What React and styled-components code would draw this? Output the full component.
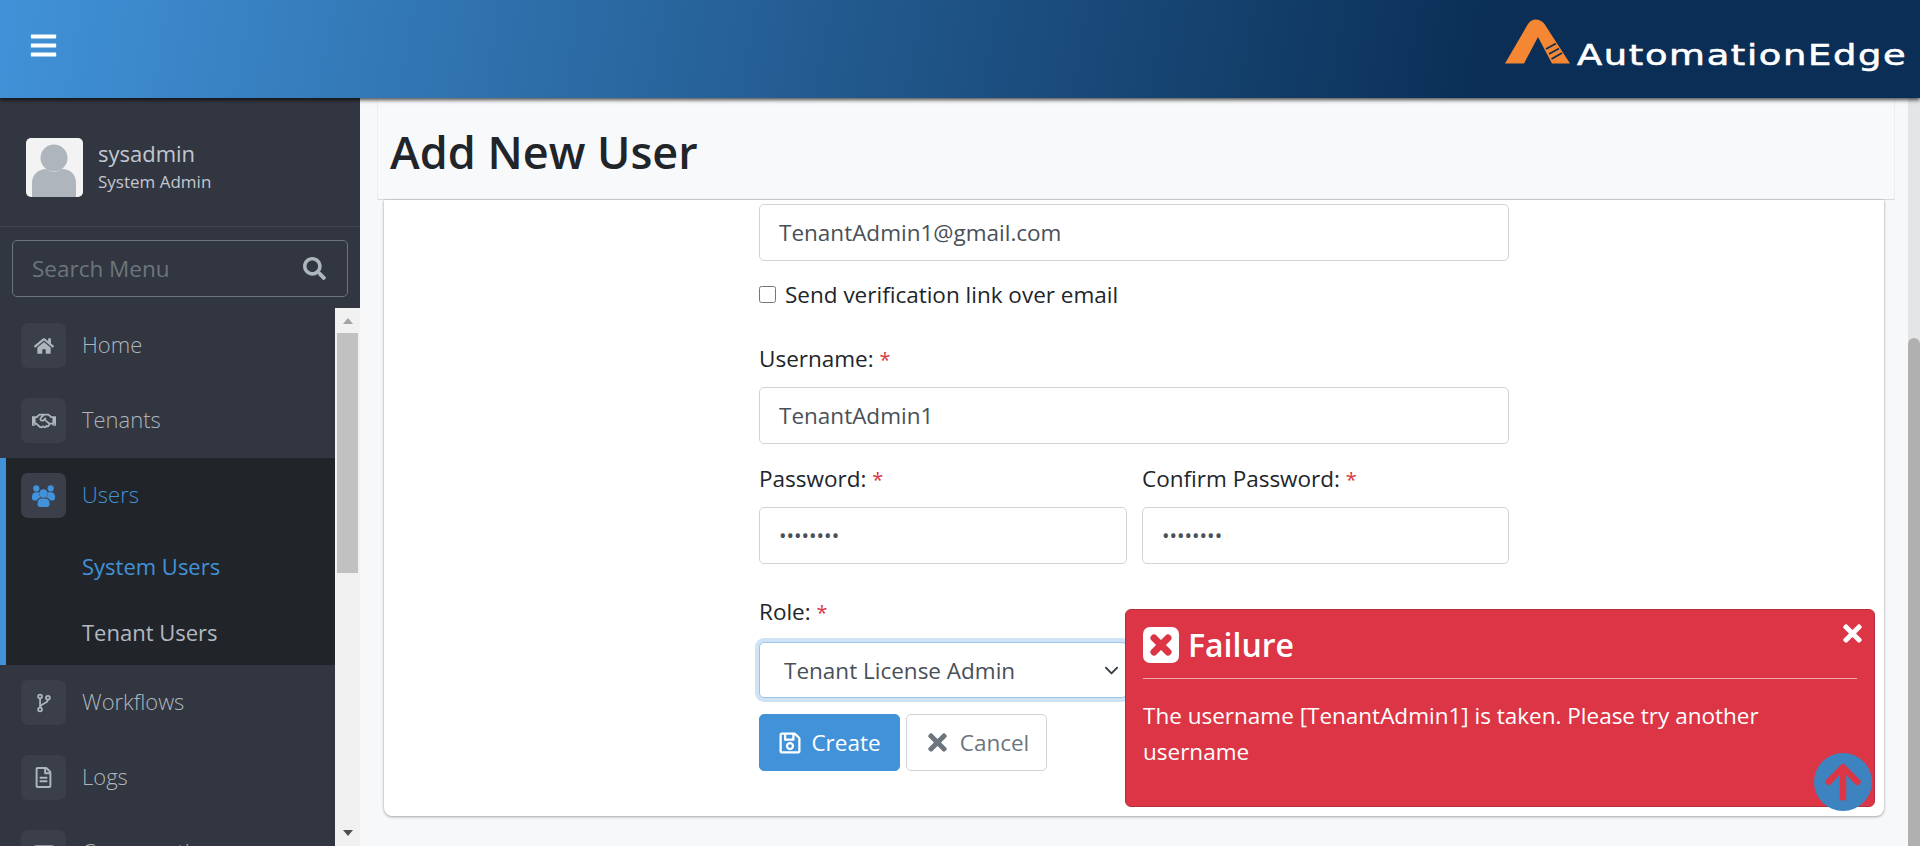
import React from "react";
import styled, { createGlobalStyle } from "styled-components";
// icons
import {
  FaArrowUp,
  FaBars,
  FaHome,
  FaRegCreditCard,
  FaRegFileAlt,
  FaRegHandshake,
  FaRegSave,
  FaSearch,
  FaTimes,
} from "react-icons/fa";

const font = `"Open Sans", "Noto Sans", sans-serif`;

const chevron = `url("data:image/svg+xml,%3csvg xmlns='http://www.w3.org/2000/svg' viewBox='0 0 16 16'%3e%3cpath fill='none' stroke='%23343a40' stroke-linecap='round' stroke-linejoin='round' stroke-width='2' d='M2 5l6 6 6-6'/%3e%3c/svg%3e")`;

const GlobalStyle = createGlobalStyle`
  * { box-sizing: border-box; }
  html, body { margin: 0; height: 100%; overflow: hidden; }
  body { font-family: ${font}; font-size: 22.5px; color: #212529; background: #f7f8fa; }
`;

function ForkIcon() {
  return (
    <svg width="14" height="20" viewBox="0 0 16 22" fill="none" stroke="currentColor" strokeWidth="2">
      <circle cx="3.5" cy="3.5" r="2.2" />
      <circle cx="3.5" cy="18.5" r="2.2" />
      <circle cx="12.5" cy="5" r="2.2" />
      <path d="M3.5 5.7V16.3M12.5 7.2C12.5 12 4 11 3.5 16" />
    </svg>
  );
}

function UsersIcon() {
  return (
    <svg width="23" height="22" viewBox="0 0 23 22" fill="currentColor">
      <circle cx="11.5" cy="8.5" r="4.3" />
      <circle cx="4.3" cy="3.4" r="3.1" />
      <circle cx="18.7" cy="3.4" r="3.1" />
      <path d="M0 11.5C0 8.5 2 7.3 4 7.3H7C6.6 9.5 7.6 11.5 9 12.6C6.5 13 5.2 14.5 5 15.5H2.5C1 15.5 0 14.5 0 13.2ZM23 11.5C23 8.5 21 7.3 19 7.3H16C16.4 9.5 15.4 11.5 14 12.6C16.5 13 17.8 14.5 18 15.5H20.5C22 15.5 23 14.5 23 13.2Z" />
      <path d="M5.5 18C5.5 15 7.5 13.4 9.5 13.4H13.5C15.5 13.4 17.5 15 17.5 18V19.5C17.5 21 16.5 22 15 22H8C6.5 22 5.5 21 5.5 19.5Z" />
    </svg>
  );
}

function Logo() {
  return (
    <svg width="66" height="46" viewBox="0 0 66 46">
      <path
        d="M0 44.5L23 5Q26 0.5 30.5 0.5Q36 0.5 39.5 5L65 44.5H47L33 18L19 44.5Z"
        fill="#f58634"
      />
      <path d="M41 30L51 24.5M44 35L54 29.5M46.5 40L57 34" stroke="#0a2e55" strokeWidth="1.8" />
    </svg>
  );
}

function FailureIcon() {
  return (
    <svg width="36" height="36" viewBox="0 0 36 36">
      <rect width="36" height="36" rx="7" fill="#fff" />
      <path d="M11 11L25 25M25 11L11 25" stroke="#dc3545" strokeWidth="7" strokeLinecap="round" />
    </svg>
  );
}

const menu = [
  { label: "Home", icon: <FaHome size={20} /> },
  { label: "Tenants", icon: <FaRegHandshake size={24} /> },
  {
    label: "Users",
    icon: <UsersIcon />,
    active: true,
    children: [
      { label: "System Users", active: true },
      { label: "Tenant Users" },
    ],
  },
  { label: "Workflows", icon: <ForkIcon /> },
  { label: "Logs", icon: <FaRegFileAlt size={21} /> },
  { label: "Consumption", icon: <FaRegCreditCard size={20} /> },
];

export default function App() {
  return (
    <Page>
      <GlobalStyle />
      <TopBar>
        <MenuToggle>
          <FaBars size={29} />
        </MenuToggle>
        <Brand>
          <Logo />
          <BrandName>AutomationEdge</BrandName>
        </Brand>
      </TopBar>

      <Body>
        <Sidebar>
          <UserPanel>
            <Avatar>
              <svg width="57" height="59" viewBox="0 0 57 59">
                <circle cx="28" cy="20" r="13.5" fill="#aeb5bc" />
                <path d="M6 59V45C6 36 13 31 20 31Q28 37 36 31C44 31 50 36 50 45V59Z" fill="#aeb5bc" />
              </svg>
            </Avatar>
            <div>
              <UserName>sysadmin</UserName>
              <UserRole>System Admin</UserRole>
            </div>
          </UserPanel>
          <SearchBox>
            <SearchInput placeholder="Search Menu" />
            <FaSearch size={23} color="#adb5bd" />
          </SearchBox>
          <MenuArea>
            <MenuList>
              {menu.map((item) => (
                <MenuGroup key={item.label} active={item.active}>
                  <MenuRow active={item.active}>
                    <IconBox>{item.icon}</IconBox>
                    <MenuText>{item.label}</MenuText>
                  </MenuRow>
                  {item.children &&
                    item.children.map((child) => (
                      <SubRow key={child.label} active={child.active}>
                        {child.label}
                      </SubRow>
                    ))}
                </MenuGroup>
              ))}
            </MenuList>
            <SideScroll>
              <ScrollArrow />
              <SideThumb />
              <ScrollArrow down />
            </SideScroll>
          </MenuArea>
        </Sidebar>

        <Main>
          <PageHeader>
            <Title>Add New User</Title>
          </PageHeader>
          <Card>
            <Form>
              <Input type="text" defaultValue="TenantAdmin1@gmail.com" />
              <CheckRow>
                <Check type="checkbox" />
                Send verification link over email
              </CheckRow>

              <Label first>
                Username: <Star>*</Star>
              </Label>
              <Input type="text" defaultValue="TenantAdmin1" />

              <Columns>
                <div>
                  <Label>
                    Password: <Star>*</Star>
                  </Label>
                  <Input type="password" defaultValue="password" />
                </div>
                <div>
                  <Label>
                    Confirm Password: <Star>*</Star>
                  </Label>
                  <Input type="password" defaultValue="password" />
                </div>
              </Columns>

              <Columns>
                <RoleCol>
                  <Label>
                    Role: <Star>*</Star>
                  </Label>
                  <Select defaultValue="license">
                    <option value="license">Tenant License Admin</option>
                  </Select>
                </RoleCol>
              </Columns>

              <Buttons>
                <Button primary>
                  <FaRegSave size={24} /> Create
                </Button>
                <Button>
                  <FaTimes size={27} /> Cancel
                </Button>
              </Buttons>
            </Form>
          </Card>

          <Toast>
            <ToastClose>
              <FaTimes size={27} />
            </ToastClose>
            <ToastTitle>
              <FailureIcon />
              Failure
            </ToastTitle>
            <ToastBody>
              The username [TenantAdmin1] is taken. Please try another username
            </ToastBody>
          </Toast>
          <ScrollTop>
            <FaArrowUp size={42} />
          </ScrollTop>
        </Main>

        <PageScroll>
          <PageThumb />
        </PageScroll>
      </Body>
    </Page>
  );
}

const Page = styled.div`
  height: 846px;
  display: flex;
  flex-direction: column;
  overflow: hidden;
`;

const TopBar = styled.header`
  height: 98px;
  flex: none;
  display: flex;
  justify-content: space-between;
  align-items: flex-start;
  padding: 0 15px 0 29px;
  background: linear-gradient(100deg, #4192d8 0%, #0a2e55 78%);
  box-shadow: 0 2px 4px rgba(0, 0, 0, 0.7);
  position: relative;
  z-index: 3;
`;

const MenuToggle = styled.div`
  color: #fff;
  margin-top: 31px;
`;

const Brand = styled.div`
  display: flex;
  align-items: flex-end;
  gap: 6px;
  margin-top: 19px;
`;

const BrandName = styled.span`
  width: 263px;
  margin-right: 65px;
  margin-bottom: -8px;
  font-family: "DejaVu Sans", sans-serif;
  font-size: 29px;
  line-height: 36px;
  letter-spacing: 1.3px;
  white-space: nowrap;
  color: #fff;
  -webkit-text-stroke: 0.6px #fff;
  transform: scaleX(1.27);
  transform-origin: left center;
`;

const Body = styled.div`
  flex: 1;
  display: flex;
  min-height: 0;
`;

const Sidebar = styled.aside`
  width: 360px;
  flex: none;
  display: flex;
  flex-direction: column;
  background: #323640;
`;

const UserPanel = styled.div`
  height: 129px;
  flex: none;
  display: flex;
  align-items: center;
  gap: 15px;
  padding: 10px 0 0 26px;
  border-bottom: 1px solid #41454f;
`;

const Avatar = styled.div`
  width: 57px;
  height: 59px;
  background: #f3f3f3;
  border-radius: 5px;
  overflow: hidden;
  line-height: 0;
`;

const UserName = styled.div`
  font-size: 22px;
  line-height: 30px;
  color: #c2c7d0;
`;

const UserRole = styled.div`
  font-size: 17px;
  line-height: 28px;
  color: #c2c7d0;
`;

const SearchBox = styled.div`
  height: 57px;
  flex: none;
  display: flex;
  align-items: center;
  margin: 13px 12px 11px;
  padding: 0 21px 0 19px;
  border: 1px solid #6c757d;
  border-radius: 5px;
`;

const SearchInput = styled.input`
  flex: 1;
  min-width: 0;
  padding: 0;
  border: 0;
  outline: 0;
  background: transparent;
  font-family: ${font};
  font-size: 22.5px;
  color: #c2c7d0;

  &::placeholder {
    color: #6c757d;
    opacity: 1;
  }
`;

const MenuArea = styled.div`
  flex: 1;
  min-height: 0;
  display: flex;
`;

const MenuList = styled.nav`
  flex: 1;
  min-width: 0;
  overflow: hidden;
`;

const MenuGroup = styled.div`
  background: ${(props) => (props.active ? "#212529" : "transparent")};
  border-left: ${(props) => (props.active ? "6px solid #4192d8" : "0")};
  padding-left: ${(props) => (props.active ? "0" : "6px")};
`;

const MenuRow = styled.div`
  height: 75px;
  display: flex;
  align-items: center;
  gap: 16px;
  padding-left: 15px;
  font-size: 22px;
  font-weight: 300;
  color: ${(props) => (props.active ? "#4192d8" : "#adb5bd")};
`;

const MenuText = styled.span`
  margin-bottom: 4px;
`;

const IconBox = styled.span`
  width: 45px;
  height: 45px;
  display: flex;
  align-items: center;
  justify-content: center;
  border-radius: 7px;
  background: #3a3f49;
`;

const SubRow = styled.div`
  height: 66px;
  display: flex;
  align-items: center;
  padding-left: 76px;
  font-size: 22px;
  color: ${(props) => (props.active ? "#4192d8" : "#b4b9c1")};
`;

const SideScroll = styled.div`
  width: 25px;
  flex: none;
  display: flex;
  flex-direction: column;
  align-items: center;
  background: #f1f1f1;
`;

const ScrollArrow = styled.div`
  flex: none;
  width: 0;
  height: 0;
  box-sizing: content-box;
  border-left: 5.5px solid transparent;
  border-right: 5.5px solid transparent;
  border-top: ${(props) => (props.down ? "6px solid #505050" : "0")};
  border-bottom: ${(props) => (props.down ? "0" : "6px solid #a3a3a3")};
  margin: ${(props) => (props.down ? "auto 0 10px" : "10px 0 9px")};
`;

const SideThumb = styled.div`
  width: 21px;
  height: 240px;
  background: #c1c1c1;
`;

const Main = styled.main`
  flex: 1;
  min-width: 0;
  position: relative;
  background: #f7f8fa;
`;

const PageHeader = styled.div`
  height: 102px;
  margin: 0 13px 0 17px;
  display: flex;
  align-items: center;
  padding: 6px 0 0 12px;
  background: #f8f9fa;
  border-left: 1px solid #eceef1;
  border-right: 1px solid #eceef1;
  border-bottom: 1px solid #d5d9e0;
`;

const Title = styled.h1`
  margin: 0;
  font-size: 45px;
  font-weight: 600;
  line-height: 1.2;
  color: #212529;
`;

const Card = styled.section`
  height: 616px;
  margin: 0 24px;
  display: flex;
  justify-content: center;
  padding-top: 4px;
  background: #fff;
  border-radius: 0 0 8px 8px;
  box-shadow: 0 0 2px rgba(0, 0, 0, 0.15), 0 1px 3px rgba(0, 0, 0, 0.3);
`;

const Form = styled.form`
  width: 750px;
`;

const Input = styled.input`
  display: block;
  width: 100%;
  height: 57px;
  padding: 0 19px;
  font-family: ${font};
  font-size: 22.5px;
  color: #495057;
  background: #fff;
  border: 1px solid #ced4da;
  border-radius: 5px;
  outline: 0;

  &[type="password"] {
    font-size: 20px;
  }
`;

const CheckRow = styled.label`
  display: flex;
  align-items: center;
  gap: 9px;
  height: 30px;
  margin-top: 18px;
`;

const Check = styled.input`
  width: 17px;
  height: 17px;
  margin: 0;
`;

const Label = styled.label`
  display: block;
  height: 30px;
  line-height: 30px;
  margin: ${(props) => (props.first ? "35px" : "20px")} 0 13px;
`;

const Star = styled.span`
  font-size: 20px;
  color: #dc3545;
`;

const Columns = styled.div`
  display: grid;
  grid-template-columns: 368px 367px;
  column-gap: 15px;
`;

const RoleCol = styled.div`
  margin-top: 13px;
`;

const Select = styled.select`
  display: block;
  width: 100%;
  height: 56px;
  margin-top: 15px;
  padding: 0 24px;
  appearance: none;
  font-family: ${font};
  font-size: 22.5px;
  color: #495057;
  background: #fff ${chevron} no-repeat right 7px center / 15px 15px;
  border: 1px solid #9ac4ea;
  border-radius: 5px;
  box-shadow: 0 0 0 4px #d0e3f5;
  outline: 0;
`;

const Buttons = styled.div`
  display: flex;
  gap: 6px;
  margin-top: 16px;
`;

const Button = styled.button`
  width: 141px;
  height: 57px;
  display: flex;
  align-items: center;
  justify-content: center;
  gap: 9px;
  padding: 0;
  font-family: ${font};
  font-size: 22.5px;
  color: ${(props) => (props.primary ? "#fff" : "#6c757d")};
  background: ${(props) => (props.primary ? "#4192d8" : "#fff")};
  border: 1px solid ${(props) => (props.primary ? "#4192d8" : "#ced4da")};
  border-radius: 5px;
`;

const Toast = styled.div`
  position: absolute;
  top: 511px;
  right: 33px;
  width: 750px;
  height: 198px;
  padding: 17px 17px 0;
  color: #fff;
  background: #dc3545;
  border: 1px solid #b5303d;
  border-radius: 6px;
`;

const ToastClose = styled.div`
  position: absolute;
  top: 10px;
  right: 8px;
`;

const ToastTitle = styled.div`
  display: flex;
  align-items: center;
  gap: 9px;
  height: 52px;
  font-size: 32px;
  font-weight: 600;
  border-bottom: 1px solid #ecaab1;
  padding-bottom: 16px;
`;

const ToastBody = styled.p`
  margin: 19px 0 0;
  line-height: 36px;
`;

const ScrollTop = styled.div`
  position: absolute;
  top: 655px;
  right: 36px;
  width: 58px;
  height: 58px;
  display: flex;
  align-items: center;
  justify-content: center;
  color: #dc3545;
  background: #3c83c0;
  border-radius: 50%;
`;

const PageScroll = styled.div`
  width: 12px;
  flex: none;
  display: flex;
  align-items: flex-end;
  background: #e4e5e6;
`;

const PageThumb = styled.div`
  width: 12px;
  height: 508px;
  background: #b0b0b0;
  border-radius: 6px 6px 0 0;
`;
